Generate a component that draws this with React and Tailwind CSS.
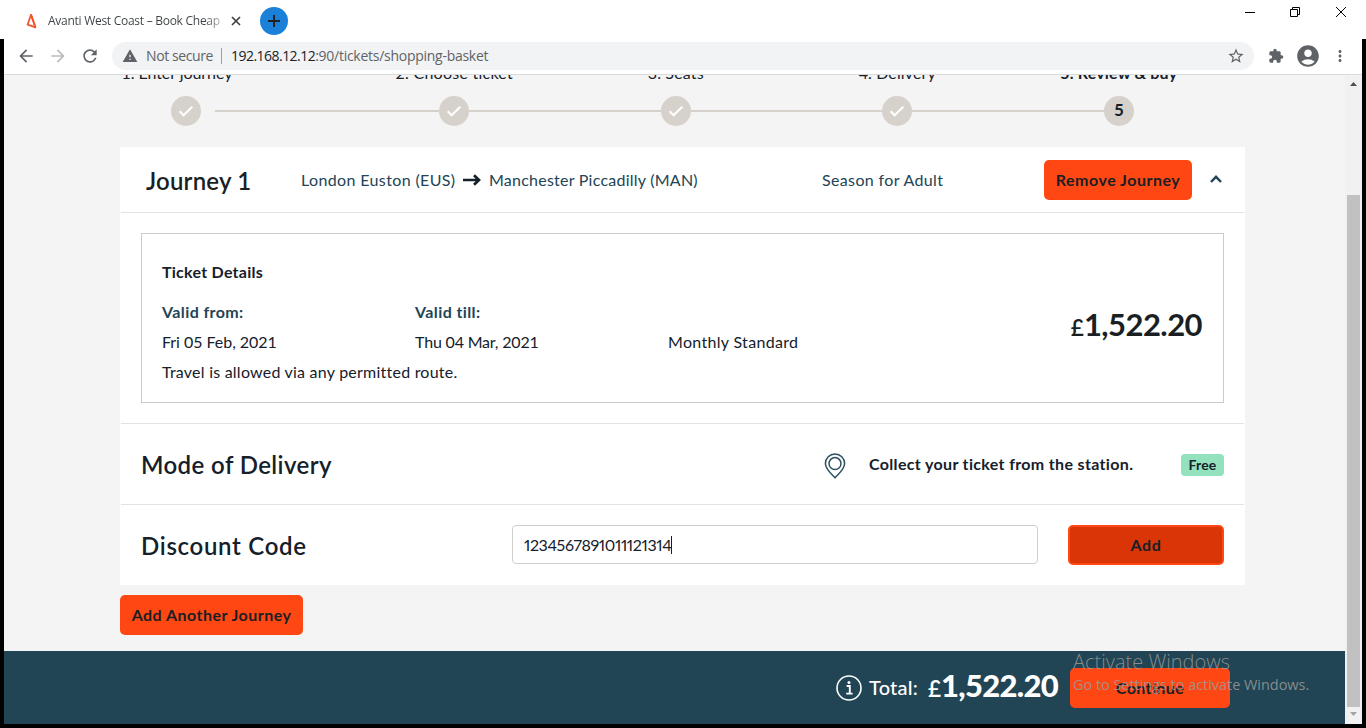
import {
  MdAccountCircle,
  MdArrowBack,
  MdArrowForward,
  MdExtension,
  MdMoreVert,
  MdRefresh,
  MdStarBorder,
  MdWarning,
} from "react-icons/md";

function TitleBar() {
  return (
    <div className="flex h-[39px] shrink-0 items-start bg-white">
      <div className="flex h-[42px] w-[260px] items-center pl-[26px]">
        <svg className="h-4 w-3 shrink-0" viewBox="0 0 12 16" fill="none">
          <path d="M5 1.8 L1.6 11.6 L9.4 14.4 Z" stroke="#f5532a" strokeWidth="1.7" strokeLinejoin="round" />
          <path d="M5 1.4 L9 13" stroke="#f5532a" strokeWidth="1.7" />
        </svg>
        <span className="ml-2.5 w-[173px] overflow-hidden bg-linear-to-r from-[#3c4043] from-90% to-[#b9bbbd] bg-clip-text text-[12px] leading-4 tracking-[-0.27px] whitespace-nowrap text-transparent">
          Avanti West Coast – Book Cheap
        </span>
        <svg className="ml-2.5 h-2.5 w-2.5 shrink-0" viewBox="0 0 10 10" stroke="#3c4043" strokeWidth="1.7">
          <path d="M1 1 L9 9 M9 1 L1 9" />
        </svg>
      </div>
      <div className="mt-[7px] flex h-7 w-7 items-center justify-center rounded-full bg-[#1b81d8]">
        <svg className="h-3 w-3" viewBox="0 0 12 12" stroke="#202124" strokeWidth="2">
          <path d="M6 0 V12 M0 6 H12" />
        </svg>
      </div>
      <div className="mt-[7px] ml-auto flex items-center pr-5 text-black">
        <svg className="h-2.5 w-2.5" viewBox="0 0 10 10" stroke="currentColor">
          <path d="M0 5.5 H10" />
        </svg>
        <svg className="ml-[35px] h-2.5 w-2.5" viewBox="0 0 10 10" stroke="currentColor" fill="none">
          <path d="M0.5 2.5 H7.5 V9.5 H0.5 Z M2.5 2.5 V0.5 H9.5 V7.5 H7.5" />
        </svg>
        <svg className="ml-9 h-2.5 w-2.5" viewBox="0 0 10 10" stroke="currentColor">
          <path d="M0 0 L10 10 M10 0 L0 10" />
        </svg>
      </div>
    </div>
  );
}

function Toolbar() {
  return (
    <div className="flex h-9 shrink-0 items-center border-b border-[#d9dadc] bg-white pr-[13px] pb-0.5 pl-3 text-[#5f6368]">
      <MdArrowBack className="h-5 w-5" />
      <MdArrowForward className="ml-3 h-5 w-5 text-[#bbbcbe]" />
      <MdRefresh className="ml-3 h-5 w-5" />
      <div className="ml-3 flex h-7 flex-1 items-center rounded-full bg-[#f1f3f4] pr-[9px] pl-2.5 text-[14px] leading-5">
        <MdWarning className="h-4 w-4" />
        <span className="ml-2 w-[68px] tracking-[-0.4px] whitespace-nowrap">Not secure</span>
        <span className="ml-[7px] h-4 w-px bg-[#9aa0a6]" />
        <span className="ml-[9px] whitespace-nowrap">
          <span className="tracking-[-0.53px] text-[#202124]">192.168.12.12</span>
          <span className="tracking-[-0.27px]">:90/tickets/shopping-basket</span>
        </span>
        <MdStarBorder className="ml-auto h-[18px] w-[18px]" />
      </div>
      <MdExtension className="ml-3.5 h-4 w-4" />
      <MdAccountCircle className="ml-[11px] h-[26px] w-[26px]" />
      <MdMoreVert className="ml-2.5 h-[18px] w-[18px]" />
    </div>
  );
}

function DoneStep() {
  return (
    <span className="flex h-[30px] w-[30px] shrink-0 items-center justify-center rounded-full bg-[#d6d1ca]">
      <svg className="h-3 w-4" viewBox="0 0 16 12" fill="none" stroke="#fff" strokeWidth="2.1">
        <path d="M1.7 6.3 L5.6 10.2 L14.3 1.7" />
      </svg>
    </span>
  );
}

function Steps() {
  return (
    <div className="h-[72px] shrink-0 overflow-hidden">
      <div className="-mt-3.5 flex pl-[117.5px] text-[16px] leading-6 whitespace-nowrap">
        <div className="w-[222px] tracking-[-0.06px]">1. Enter journey</div>
        <div className="w-[221.5px] text-center tracking-[0.25px]">2. Choose ticket</div>
        <div className="w-[221.5px] text-center tracking-[0.15px]">3. Seats</div>
        <div className="w-[221.5px] text-center tracking-[0.12px]">4. Delivery</div>
        <div className="w-[221.5px] text-center font-bold tracking-[0.18px]">5. Review &amp; buy</div>
      </div>
      <div className="mt-[11px] flex items-center pl-[167px]">
        <DoneStep />
        <span className="ml-3.5 h-0.5 w-56 bg-[#d6d1ca]" />
        <DoneStep />
        <span className="h-0.5 w-48 bg-[#d6d1ca]" />
        <DoneStep />
        <span className="h-0.5 w-[191px] bg-[#d6d1ca]" />
        <DoneStep />
        <span className="h-0.5 w-48 bg-[#d6d1ca]" />
        <span className="flex h-[30px] w-[30px] items-center justify-center rounded-full bg-[#d6d1ca] pb-0.5 text-[17px] font-bold">
          5
        </span>
      </div>
    </div>
  );
}

function JourneyHeader() {
  return (
    <div className="mx-px flex h-[66px] items-center border-b border-[#e3e3e3] pt-px pl-[25px] whitespace-nowrap text-[#224454]">
      <h2 className="w-[155px] pt-0.5 text-[24px] font-semibold tracking-[0.2px] text-[#1a1f23]">Journey 1</h2>
      <span className="w-[162px] tracking-[0.37px]">London Euston (EUS)</span>
      <svg className="h-3 w-[18px]" viewBox="0 0 18 12" fill="none" stroke="#15202a" strokeWidth="2.7">
        <path d="M0 6 H15.5 M11 1.2 L16 6 L11 10.8" />
      </svg>
      <span className="ml-2 w-[333px] tracking-[0.24px]">Manchester Piccadilly (MAN)</span>
      <span className="w-[222px] tracking-[0.36px]">Season for Adult</span>
      <button className="h-10 w-[148px] rounded-[5px] bg-[#ff4713] font-bold tracking-[0.5px] text-[#1a1f23]">
        Remove Journey
      </button>
      <svg className="-mt-0.5 ml-[18px] h-2 w-3" viewBox="0 0 12 8" fill="none" stroke="#224454" strokeWidth="2.4">
        <path d="M1 7 L6 1.8 L11 7" />
      </svg>
    </div>
  );
}

function TicketDetails() {
  return (
    <div className="m-5 mx-[21px] flex h-[170px] items-center justify-between border border-[#cbcbcb] pr-[21px] pl-5">
      <div className="pt-2 leading-[30px] whitespace-nowrap">
        <h3 className="mb-2.5 font-bold tracking-[0.26px]">Ticket Details</h3>
        <div className="grid grid-cols-[253px_253px_200px]">
          <span className="font-bold tracking-[0.4px] text-[#224454]">Valid from:</span>
          <span className="font-bold tracking-[0.4px] text-[#224454]">Valid till:</span>
          <span />
          <span className="tracking-[-0.04px]">Fri 05 Feb, 2021</span>
          <span className="tracking-[-0.18px]">Thu 04 Mar, 2021</span>
          <span className="tracking-[0.32px]">Monthly Standard</span>
        </div>
        <p className="tracking-[0.23px]">Travel is allowed via any permitted route.</p>
      </div>
      <div className="mt-3 flex items-baseline text-[#1a1f23]">
        <span className="text-[22.5px] font-semibold">£</span>
        <span className="text-[31px] leading-10 font-bold tracking-[-0.55px]">1,522.20</span>
      </div>
    </div>
  );
}

function DeliveryRow() {
  return (
    <div className="mx-px flex h-[82px] items-center border-y border-[#e3e3e3] px-5 whitespace-nowrap">
      <h2 className="pt-px text-[24px] font-semibold tracking-[0.4px]">Mode of Delivery</h2>
      <svg className="mt-[3px] ml-auto h-[26px] w-[22px]" viewBox="0 0 22 26" fill="none" stroke="#2c5060" strokeWidth="1.5">
        <path d="M11 24.8 C7.5 21 1.4 16.2 1.4 10.5 A9.6 9.6 0 0 1 20.6 10.5 C20.6 16.2 14.5 21 11 24.8 Z" />
        <circle cx="11" cy="10.6" r="6" />
      </svg>
      <span className="ml-[23px] w-[312px] font-bold tracking-[0.34px]">Collect your ticket from the station.</span>
      <span className="mt-px h-[22px] w-[43px] rounded-[4px] bg-[#94e1be] text-center text-[14px] leading-[22px] font-bold tracking-[0.2px]">
        Free
      </span>
    </div>
  );
}

function DiscountRow() {
  return (
    <div className="flex h-20 items-center px-[21px]">
      <h2 className="w-[371px] pt-px text-[24px] font-semibold tracking-[0.7px]">Discount Code</h2>
      <div className="mb-0.5 flex h-[39px] w-[526px] items-center rounded-[4px] border border-[#cfcfca] pt-px pl-[11px]">
        <span className="tracking-[-0.39px] proportional-nums">1234567891011121314</span>
        <span className="h-[18px] w-px bg-[#15202a]" />
      </div>
      <button className="ml-[30px] h-10 w-[156px] rounded-[5px] border-2 border-[#ff4713] bg-[#da3507] font-bold tracking-[0.6px]">
        Add
      </button>
    </div>
  );
}

function Footer() {
  return (
    <div className="relative mt-auto flex h-[73px] shrink-0 items-center bg-[#214554] pl-[832px] whitespace-nowrap text-white">
      <svg className="h-[26px] w-[26px] shrink-0" viewBox="0 0 26 26" fill="none">
        <circle cx="13" cy="13" r="12" stroke="#fff" strokeWidth="1.6" />
        <path d="M10.6 11 H13.8 V18.3 M10.2 18.6 H16.6" stroke="#fff" strokeWidth="1.9" />
        <circle cx="13" cy="7.4" r="1.5" fill="#fff" />
      </svg>
      <span className="ml-[7px] w-[59px] pb-0.5 text-[20px] font-medium tracking-[0.2px]">Total:</span>
      <span className="flex w-[142px] items-baseline pb-[5px]">
        <span className="text-[22.5px] font-semibold">£</span>
        <span className="text-[31px] leading-10 font-black tracking-[-0.7px]">1,522.20</span>
      </span>
      <button className="h-10 w-40 rounded-[5px] bg-[#ff4713] font-bold tracking-[0.4px] text-[#1a1f23]">
        Continue
      </button>
      <div className="pointer-events-none absolute top-0 left-[1069px] font-['Open_Sans'] text-[#9a9a9a]/85">
        <div className="text-[20px] leading-[22px] font-light tracking-[0px]">Activate Windows</div>
        <div className="pt-px text-[14.5px] leading-[22px] tracking-[-0.04px]">Go to Settings to activate Windows.</div>
      </div>
    </div>
  );
}

function ScrollBar() {
  return (
    <div className="flex w-[17px] shrink-0 flex-col items-center bg-[#f1f1f1] pt-[7px] pb-2">
      <svg className="h-1 w-[7px] shrink-0" viewBox="0 0 7 4" fill="#505050">
        <path d="M0 4 L3.5 0 L7 4 Z" />
      </svg>
      <div className="mt-[109px] h-[512px] w-[13px] shrink-0 bg-[#c1c1c1]" />
      <svg className="mt-auto h-1 w-[7px] shrink-0" viewBox="0 0 7 4" fill="#a3a3a3">
        <path d="M0 0 H7 L3.5 4 Z" />
      </svg>
    </div>
  );
}

export default function App() {
  return (
    <div className="flex h-[728px] w-[1366px] flex-col overflow-hidden bg-white font-['Open_Sans',sans-serif]">
      <TitleBar />
      <div className="flex min-h-0 flex-1 flex-col border-x-4 border-b-4 border-black">
        <Toolbar />
        <div className="flex min-h-0 flex-1">
          <main className="flex flex-1 flex-col bg-[#f4f4f4] font-['Lato',sans-serif] text-[16px] leading-6 text-[#15202a]">
            <Steps />
            <section className="ml-[116px] w-[1125px] bg-white">
              <JourneyHeader />
              <TicketDetails />
              <DeliveryRow />
              <DiscountRow />
            </section>
            <button className="mt-2.5 ml-[116px] h-10 w-[183px] rounded-[5px] bg-[#ff4713] font-bold tracking-[0.47px] text-[#1a1f23]">
              Add Another Journey
            </button>
            <Footer />
          </main>
          <ScrollBar />
        </div>
      </div>
    </div>
  );
}
